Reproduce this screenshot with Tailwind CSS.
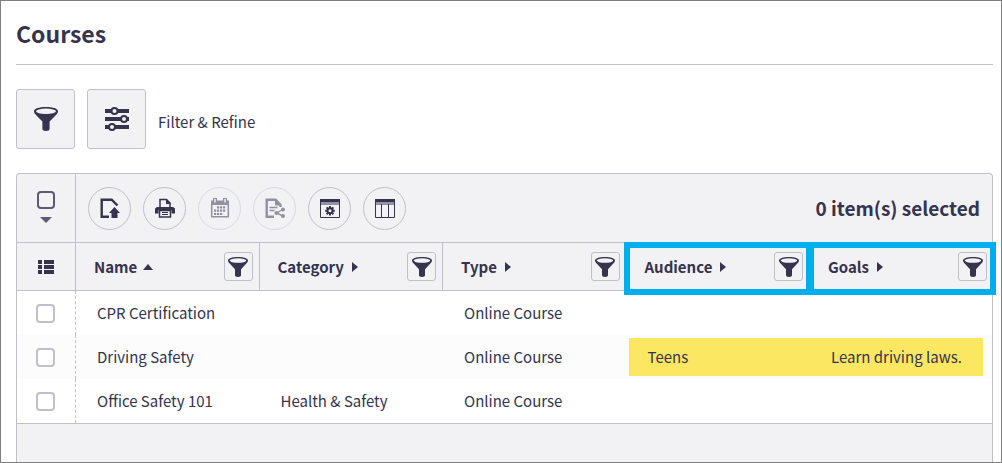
<!DOCTYPE html>
<html lang="en">
<head>
    <meta charset="UTF-8">
    <meta name="viewport" content="width=device-width, initial-scale=1.0">
    <title>Courses</title>
    <script src="https://cdn.jsdelivr.net/npm/@tailwindcss/browser@4"></script>
</head>
<body class="min-h-screen flex flex-col bg-white border border-[#7f7f7f] pl-[15px] pr-2 font-['Noto_Sans_CJK_SC',sans-serif] text-[15px] leading-6 text-[#35334d]">
    <!-- shared icons -->
    <svg class="hidden">
        <symbol id="funnel" viewBox="0 0 24 24">
            <path fill="currentColor" d="M0 4.200C0 1.600 5 0 12 0s12 1.600 12 4.200c0 1.400-.8 2.400-2 3.700L15.600 14.600V22c0 1.300-1.400 2-3.600 2s-3.600-.7-3.600-2v-7.400L2 7.900C.8 6.600 0 5.600 0 4.200z"/>
            <ellipse fill="#f2f2f5" cx="12" cy="4.300" rx="10" ry="2.700"/>
        </symbol>
    </svg>

    <h1 class="pt-4 pb-[15px] text-[23px] leading-8 font-bold border-b border-[#c0bfcc]">Courses</h1>

    <div class="flex items-center gap-3 mt-6">
        <button aria-label="Filter" class="w-[59px] h-[60px] flex items-center justify-center bg-[#f2f2f5] border border-[#c0bfcc] rounded-[3px]">
            <svg class="size-6"><use href="#funnel"/></svg>
        </button>
        <button id="refine" aria-label="Refine" class="w-[59px] h-[60px] flex items-center justify-center bg-[#f2f2f5] border border-[#c0bfcc] rounded-[3px]">
            <svg class="size-6" viewBox="0 0 24 24">
                <path stroke="currentColor" stroke-width="4" d="M0 4h24M0 12h24M0 20h24"/>
                <g fill="#f2f2f5" stroke="currentColor" stroke-width="2">
                    <circle cx="9.500" cy="4" r="3"/>
                    <circle cx="19" cy="12" r="3"/>
                    <circle cx="7" cy="20" r="3"/>
                </g>
            </svg>
        </button>
        <label for="refine" class="pt-[5px]">Filter &amp; Refine</label>
    </div>

    <div class="flex-1 flex flex-col mt-6 bg-[#f2f2f5] border border-b-0 border-[#c0bfcc] rounded-t-[4px]">
        <!-- toolbar -->
        <div class="flex items-stretch h-[68px]">
            <div class="w-[59px] flex flex-col items-center pt-[17px] gap-2 border-r border-[#c0bfcc]">
                <input type="checkbox" aria-label="Select all" class="appearance-none size-[18px] border-2 border-[#5d5b71] rounded-[4px]">
                <button aria-label="Selection options">
                    <svg class="w-3 h-[6px]" viewBox="0 0 12 6"><path fill="#5d5b71" d="M0 0h12L6 6z"/></svg>
                </button>
            </div>
            <div class="flex-1 flex items-center gap-3 px-3">
                <button aria-label="Export" class="size-[43px] flex items-center justify-center border border-[#c0bfcc] rounded-full">
                    <svg class="size-5" viewBox="0 0 20 20">
                        <path fill="none" stroke="currentColor" stroke-width="2.400" d="M9 18.800H1.700V1.700h10L17.500 7.500"/>
                        <path fill="currentColor" d="M14.500 9l5.500 6h-2.500v5h-6v-5H9z"/>
                    </svg>
                </button>
                <button aria-label="Print" class="size-[43px] flex items-center justify-center border border-[#c0bfcc] rounded-full">
                    <svg class="size-5" viewBox="0 0 20 20">
                        <path fill="none" stroke="currentColor" stroke-width="1.500" d="M5 9.500V1.500h6.500L15 5v4.500"/>
                        <path fill="currentColor" d="M11 1l5 5h-5zM2 9h16l2 1.500v5h-3.500V12h-13v3.500H0v-5z"/>
                        <path fill="none" stroke="currentColor" stroke-width="1.500" d="M4.500 12.500h11v6.500h-11z"/>
                        <path stroke="currentColor" d="M7 14.500h6M7 16.500h6"/>
                    </svg>
                </button>
                <button aria-label="Schedule" disabled class="size-[43px] flex items-center justify-center border border-[#c0bfcc] rounded-full opacity-50">
                    <svg class="size-5" viewBox="0 0 20 20">
                        <path fill="currentColor" d="M1 2.500h2V0h4v2.500h6V0h4v2.500h2V7H1z"/>
                        <path fill="none" stroke="currentColor" stroke-width="1.500" d="M1.700 6v12.700h16.600V6"/>
                        <path stroke="#f2f2f5" stroke-width="1.400" d="M5 1v3.500M15 1v3.500"/>
                        <path stroke="currentColor" stroke-width="2.200" stroke-dasharray="2.200 .8" d="M7 9.300h9M4 12.700h12M4 16h9"/>
                    </svg>
                </button>
                <button aria-label="Share" disabled class="size-[43px] flex items-center justify-center border border-[#c0bfcc] rounded-full opacity-50">
                    <svg class="size-5" viewBox="0 0 20 20">
                        <path fill="none" stroke="currentColor" stroke-width="2.400" d="M9 18.800H1.700V1.700h9L15.500 7v2"/>
                        <path fill="currentColor" d="M10 1l6.500 6.500H10z"/>
                        <path stroke="currentColor" stroke-width="1.400" d="M4.500 9.500h8M4.500 12.500h5"/>
                        <path fill="none" stroke="currentColor" stroke-width="1.400" d="M18 11.500L11.500 15l6.500 3"/>
                        <circle fill="currentColor" cx="18" cy="11.500" r="2"/>
                        <circle fill="currentColor" cx="11.500" cy="15" r="2"/>
                        <circle fill="currentColor" cx="18" cy="18" r="2"/>
                    </svg>
                </button>
                <button aria-label="Settings" class="size-[43px] flex items-center justify-center border border-[#c0bfcc] rounded-full">
                    <svg class="size-5" viewBox="0 0 20 20">
                        <path fill="currentColor" d="M0 1h20v3.500H0zM0 5.500h20v1H0z"/>
                        <path fill="none" stroke="currentColor" d="M.5 4v15.500h19V4"/>
                        <circle cx="10" cy="12.800" r="2.500" fill="none" stroke="currentColor" stroke-width="2"/>
                        <path stroke="currentColor" stroke-width="2" d="M10 8v2M10 15.500v2M5.200 12.800h2M12.800 12.800h2M6.600 9.400L8 10.800M12 14.800l1.400 1.400M13.400 9.400L12 10.800M8 14.800l-1.400 1.400"/>
                    </svg>
                </button>
                <button aria-label="Columns" class="size-[43px] flex items-center justify-center border border-[#c0bfcc] rounded-full">
                    <svg class="size-5" viewBox="0 0 20 20">
                        <path fill="currentColor" d="M0 1h20v3.500H0zM0 5.500h20v1H0z"/>
                        <path fill="none" stroke="currentColor" d="M.5 4v15.500h19V4M6.500 6v13.500M13.500 6v13.500"/>
                    </svg>
                </button>
                <span class="ml-auto text-[19px] leading-7 font-bold">0 item(s) selected</span>
            </div>
        </div>

        <table class="w-full table-fixed border-separate border-spacing-0">
            <colgroup>
                <col class="w-[59px]">
                <col>
                <col>
                <col>
                <col>
                <col class="w-[182px]">
            </colgroup>
            <thead class="text-left">
                <tr class="h-[49px]">
                    <th class="border-y border-r border-[#c0bfcc]">
                        <button aria-label="List view" class="flex mx-auto">
                            <svg class="w-4 h-[14px]" viewBox="0 0 16 14"><path fill="currentColor" d="M0 0h4v4H0zM6 0h10v4H6zM0 5h4v4H0zM6 5h10v4H6zM0 10h4v4H0zM6 10h10v4H6z"/></svg>
                        </button>
                    </th>
                    <th class="border-y border-r border-[#c0bfcc] pl-[18px] pr-[6px] font-bold">
                        <div class="flex items-center gap-[6px]">
                            <button>Name</button>
                            <svg class="w-[10px] h-[6px]" viewBox="0 0 10 6"><path fill="currentColor" d="M5 0l5 6H0z"/></svg>
                            <button aria-label="Filter by name" class="ml-auto size-[29px] flex items-center justify-center border border-[#c0bfcc] rounded-[3px]"><svg class="size-5"><use href="#funnel"/></svg></button>
                        </div>
                    </th>
                    <th class="border-y border-r border-[#c0bfcc] pl-[18px] pr-[6px] font-bold">
                        <div class="flex items-center gap-2">
                            <button>Category</button>
                            <svg class="w-[6px] h-[10px]" viewBox="0 0 6 10"><path fill="currentColor" d="M0 0l6 5-6 5z"/></svg>
                            <button aria-label="Filter by category" class="ml-auto size-[29px] flex items-center justify-center border border-[#c0bfcc] rounded-[3px]"><svg class="size-5"><use href="#funnel"/></svg></button>
                        </div>
                    </th>
                    <th class="border-y border-r border-[#c0bfcc] pl-[18px] pr-[6px] font-bold">
                        <div class="flex items-center gap-2">
                            <button>Type</button>
                            <svg class="w-[6px] h-[10px]" viewBox="0 0 6 10"><path fill="currentColor" d="M0 0l6 5-6 5z"/></svg>
                            <button aria-label="Filter by type" class="ml-auto size-[29px] flex items-center justify-center border border-[#c0bfcc] rounded-[3px]"><svg class="size-5"><use href="#funnel"/></svg></button>
                        </div>
                    </th>
                    <th class="relative border-y border-r border-[#c0bfcc] pl-[18px] pr-[6px] font-bold">
                        <div class="flex items-center gap-2">
                            <button>Audience</button>
                            <svg class="w-[6px] h-[10px]" viewBox="0 0 6 10"><path fill="currentColor" d="M0 0l6 5-6 5z"/></svg>
                            <button aria-label="Filter by audience" class="ml-auto size-[29px] flex items-center justify-center border border-[#c0bfcc] rounded-[3px]"><svg class="size-5"><use href="#funnel"/></svg></button>
                        </div>
                        <span class="absolute -top-px -left-[3px] -right-[3px] -bottom-[5px] border-6 border-[#00aeef] pointer-events-none"></span>
                    </th>
                    <th class="relative border-y border-[#c0bfcc] pl-[18px] pr-[5px] font-bold">
                        <div class="flex items-center gap-2">
                            <button>Goals</button>
                            <svg class="w-[6px] h-[10px]" viewBox="0 0 6 10"><path fill="currentColor" d="M0 0l6 5-6 5z"/></svg>
                            <button aria-label="Filter by goals" class="ml-auto size-[29px] flex items-center justify-center border border-[#c0bfcc] rounded-[3px]"><svg class="size-5"><use href="#funnel"/></svg></button>
                        </div>
                        <span class="absolute -top-px -left-[2px] -right-[4px] -bottom-[5px] border-6 border-[#00aeef] pointer-events-none"></span>
                    </th>
                </tr>
            </thead>
            <tbody>
                <tr class="h-11 bg-white">
                    <td class="pr-px border-r border-dashed border-[#c0bfcc]"><input type="checkbox" aria-label="Select CPR Certification" class="block mx-auto appearance-none size-[19px] bg-white border-2 border-[#c0bfcc] rounded-[4px]"></td>
                    <td class="px-[21px]">CPR Certification</td>
                    <td class="px-[21px]"></td>
                    <td class="px-[21px]">Online Course</td>
                    <td></td>
                    <td></td>
                </tr>
                <tr class="h-11 bg-[#fcfcfc]">
                    <td class="pr-px border-r border-dashed border-[#c0bfcc]"><input type="checkbox" aria-label="Select Driving Safety" class="block mx-auto appearance-none size-[19px] bg-white border-2 border-[#c0bfcc] rounded-[4px]"></td>
                    <td class="px-[21px]">Driving Safety</td>
                    <td class="px-[21px]"></td>
                    <td class="px-[21px]">Online Course</td>
                    <td class="pl-[2px]"><div class="py-[7px] pl-[19px] bg-[#fbe762]">Teens</div></td>
                    <td class="pr-[9px]"><div class="py-[7px] pl-[21px] bg-[#fbe762]">Learn driving laws.</div></td>
                </tr>
                <tr class="h-11 bg-white">
                    <td class="pr-px border-r border-dashed border-[#c0bfcc]"><input type="checkbox" aria-label="Select Office Safety 101" class="block mx-auto appearance-none size-[19px] bg-white border-2 border-[#c0bfcc] rounded-[4px]"></td>
                    <td class="px-[21px]">Office Safety 101</td>
                    <td class="px-[21px]">Health &amp; Safety</td>
                    <td class="px-[21px]">Online Course</td>
                    <td></td>
                    <td></td>
                </tr>
            </tbody>
        </table>
        <div class="flex-1 border-t border-[#c0bfcc]"></div>
    </div>
</body>
</html>
